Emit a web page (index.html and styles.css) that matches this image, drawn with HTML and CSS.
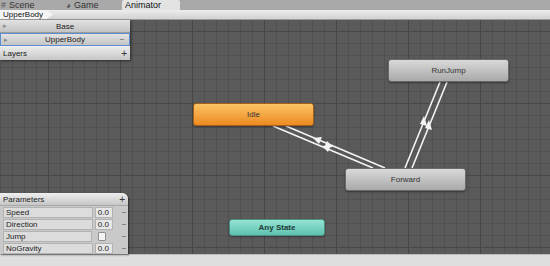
FILE: index.html
```html
<!doctype html>
<html lang="en">

<head>
    <meta charset="utf-8" />
    <meta name="viewport" content="width=device-width, initial-scale=1" />
    <title>Animator</title>
    <link rel="stylesheet" href="styles.css">
</head>

<body>
    <div class="tabs">
        <div class="tab"><span class="tab-icon">#</span>Scene</div>
        <div class="tab"><span class="tab-icon game">&#9685;</span>Game</div>
        <div class="tab active">Animator</div>
    </div>

    <div class="crumbs">
        <span class="crumb">UpperBody</span>
    </div>

    <div class="canvas">
        <svg class="links" width="550" height="235" viewBox="0 0 550 235">
            <g stroke="#f4f4f4" stroke-width="1.6" fill="none">
                <line x1="273" y1="106" x2="373" y2="148" />
                <line x1="286" y1="106" x2="385" y2="148" />
                <line x1="440" y1="62" x2="405" y2="148" />
                <line x1="447" y1="62" x2="412" y2="148" />
            </g>
            <g fill="#f4f4f4">
                <polygon points="313,118 322,117 319,124" />
                <polygon points="333,127 324,128 327,121" />
                <polygon points="322,126 331,125 328,132" />
                <polygon points="424,96 420,104 427,106" />
                <polygon points="429,100 425,108 432,110" />
            </g>
        </svg>

        <div class="node idle" style="left: 193px; top: 83px;">Idle</div>
        <div class="node" style="left: 388px; top: 39px;">RunJump</div>
        <div class="node" style="left: 345px; top: 148px;">Forward</div>
        <div class="node any" style="left: 229px; top: 199px; width: 96px; height: 17px;">Any State</div>

        <div class="panel layers">
            <div class="layer"><span class="arrow">&#9656;</span><span class="layer-name">Base</span></div>
            <div class="layer selected"><span class="arrow">&#9656;</span><span class="layer-name">UpperBody</span><span class="minus">&minus;</span></div>
            <div class="panel-head">Layers<span class="plus">+</span></div>
        </div>

        <div class="panel params">
            <div class="panel-head">Parameters<span class="plus">+</span></div>
            <div class="param"><span class="field">Speed</span><span class="value">0.0</span><span class="minus">&minus;</span></div>
            <div class="param"><span class="field">Direction</span><span class="value">0.0</span><span class="minus">&minus;</span></div>
            <div class="param"><span class="field">Jump</span><span class="check"></span><span class="minus">&minus;</span></div>
            <div class="param"><span class="field">NoGravity</span><span class="value">0.0</span><span class="minus">&minus;</span></div>
        </div>
    </div>

    <div class="status"></div>
</body>

</html>
```

FILE: styles.css
```css
body {
    margin: 0;
    width: 550px;
    height: 266px;
    overflow: hidden;
    display: flex;
    flex-direction: column;
    font-family: "Liberation Sans", Arial, sans-serif;
    font-size: 8px;
    color: #222;
    background-color: #a9a9a9;
}

.tabs {
    height: 10px;
    display: flex;
    align-items: flex-end;
    background-color: #a9a9a9;
    font-size: 9px;
}

.tab {
    width: 60px;
    height: 10px;
    line-height: 10px;
    padding-left: 1px;
    color: #333;
}

.tab:nth-child(2) {
    padding-left: 5px;
}

.tab-icon {
    display: inline-block;
    width: 7px;
    margin-right: 1px;
    color: #555;
}

.tab-icon.game {
    font-size: 8px;
}

.tab.active {
    margin-left: -4px;
    width: 55px;
    padding-left: 3px;
    background-color: #e3e3e3;
    border-radius: 2px 2px 0 0;
    color: #111;
}

.crumbs {
    height: 9px;
    background: linear-gradient(#ececec, #d2d2d2);
    border-bottom: 1px solid #9a9a9a;
    display: flex;
}

.crumb {
    height: 9px;
    line-height: 9px;
    padding: 0 10px 0 3px;
    background-color: #f4f4f4;
    clip-path: polygon(0 0, 88% 0, 100% 50%, 88% 100%, 0 100%);
    color: #111;
}

.canvas {
    position: relative;
    flex: 1;
    background-color: #5a5a5a;
    background-image:
        linear-gradient(#474747 1px, transparent 1px),
        linear-gradient(90deg, #474747 1px, transparent 1px),
        linear-gradient(#515151 1px, transparent 1px),
        linear-gradient(90deg, #515151 1px, transparent 1px);
    background-size: 72px 72px, 72px 72px, 12px 12px, 12px 12px;
    background-position: 0 11px, 48px 0, 0 11px, 0 0;
}

.status {
    height: 11px;
    background-color: #dedede;
    border-top: 1px solid #bdbdbd;
}

.links {
    position: absolute;
    left: 0;
    top: 0;
}

.node {
    position: absolute;
    width: 121px;
    height: 23px;
    line-height: 21px;
    text-align: center;
    box-sizing: border-box;
    border: 1px solid #6a6a6a;
    border-radius: 3px;
    background: linear-gradient(#d9d9d9, #a9a9a9);
    box-shadow: 0 1px 2px rgba(0, 0, 0, 0.4);
    color: #333;
}

.node.idle {
    background: linear-gradient(#fcc466, #ec8a22);
    border-color: #a3611c;
}

.node.any {
    line-height: 15px;
    background: linear-gradient(#94e4d3, #5fc2b0);
    border-color: #4d8f83;
    color: #1d3a35;
    font-weight: bold;
}

.panel {
    position: absolute;
    left: 0;
    width: 130px;
    background-color: #c9c9c9;
    box-shadow: 1px 1px 2px rgba(0, 0, 0, 0.5);
}

.layers {
    top: 0;
}

.layer {
    display: flex;
    align-items: center;
    height: 12px;
    padding: 0 3px;
    background: linear-gradient(#e2e2e2, #c4c4c4);
    border-bottom: 1px solid #9c9c9c;
}

.layer.selected {
    height: 11px;
    border: 1px solid #5b8fd1;
}

.arrow {
    width: 8px;
    color: #8a8a8a;
    font-size: 7px;
}

.layer-name {
    flex: 1;
    text-align: center;
    padding-right: 8px;
}

.layer.selected .layer-name {
    padding-right: 0;
}

.minus {
    width: 8px;
    text-align: center;
    color: #555;
}

.panel-head {
    display: flex;
    justify-content: space-between;
    align-items: center;
    height: 14px;
    padding: 0 3px;
    background: linear-gradient(#eeeeee, #c6c6c6);
    border-radius: 0 0 5px 0;
}

.plus {
    font-size: 10px;
    color: #333;
}

.params {
    bottom: 0;
    width: 128px;
    border-radius: 0 6px 0 0;
}

.params .panel-head {
    height: 12px;
    border-radius: 0 6px 0 0;
    border-bottom: 1px solid #a8a8a8;
}

.param {
    display: flex;
    align-items: center;
    height: 12px;
    padding-left: 3px;
    gap: 2px;
}

.field {
    width: 89px;
    height: 9px;
    line-height: 9px;
    padding-left: 2px;
    background-color: #dcdcdc;
    border: 1px solid #b2b2b2;
}

.value {
    width: 15px;
    height: 9px;
    line-height: 9px;
    padding-left: 2px;
    background-color: #e6e6e6;
    border: 1px solid #b2b2b2;
}

.check {
    width: 7px;
    height: 7px;
    margin: 0 7px 0 4px;
    background-color: #f3f3f3;
    border: 1px solid #8f8f8f;
    border-radius: 1px;
}

.param .minus {
    margin-left: 5px;
}
```
